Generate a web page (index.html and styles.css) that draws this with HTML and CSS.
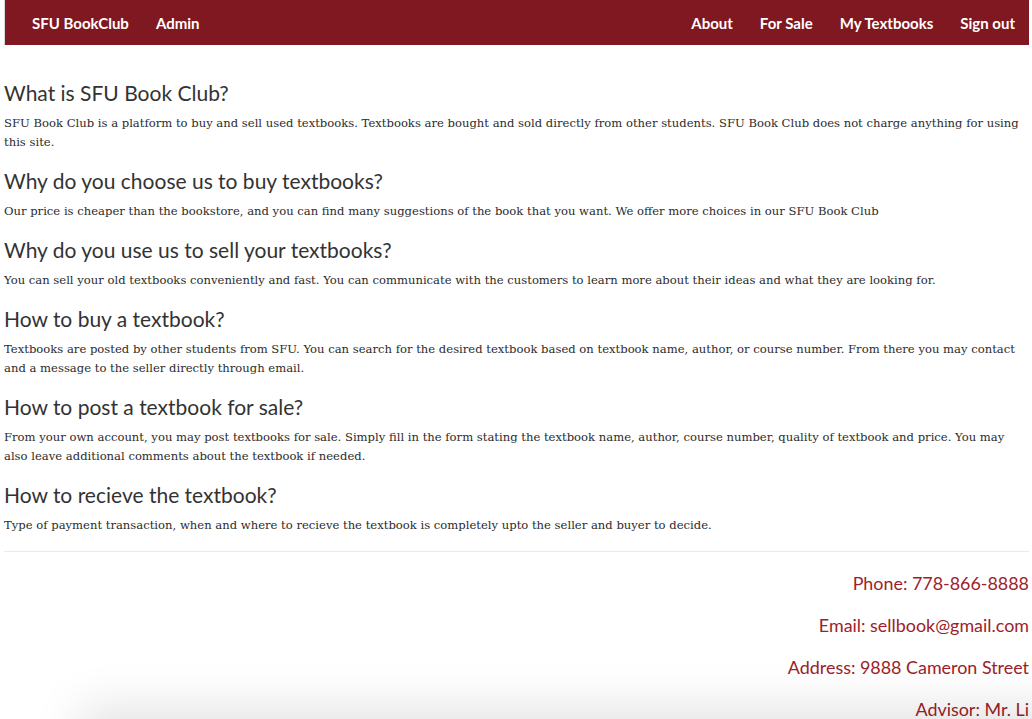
FILE: index.html
```html
<!DOCTYPE html>
<html lang="en">
<head>
<meta charset="utf-8">
<title>SFU BookClub</title>
<link rel="stylesheet" href="styles.css">
</head>
<body>
<nav class="navbar">
  <div class="nav-left">
    <a class="brand" href="#">SFU BookClub</a>
    <a class="nav-link" href="#">Admin</a>
  </div>
  <div class="nav-right">
    <a class="nav-link" href="#">About</a>
    <a class="nav-link" href="#">For Sale</a>
    <a class="nav-link" href="#">My Textbooks</a>
    <a class="nav-link" href="#">Sign out</a>
  </div>
</nav>
<main class="content">
  <section class="faq">
    <h3>What is SFU Book Club?</h3>
    <p>SFU Book Club is a platform to buy and sell used textbooks. Textbooks are bought and sold directly from other students. SFU Book Club does not charge anything for using this site.</p>
  </section>
  <section class="faq">
    <h3>Why do you choose us to buy textbooks?</h3>
    <p>Our price is cheaper than the bookstore, and you can find many suggestions of the book that you want. We offer more choices in our SFU Book Club</p>
  </section>
  <section class="faq">
    <h3>Why do you use us to sell your textbooks?</h3>
    <p>You can sell your old textbooks conveniently and fast. You can communicate with the customers to learn more about their ideas and what they are looking for.</p>
  </section>
  <section class="faq">
    <h3>How to buy a textbook?</h3>
    <p>Textbooks are posted by other students from SFU. You can search for the desired textbook based on textbook name, author, or course number. From there you may contact and a message to the seller directly through email.</p>
  </section>
  <section class="faq">
    <h3>How to post a textbook for sale?</h3>
    <p>From your own account, you may post textbooks for sale. Simply fill in the form stating the textbook name, author, course number, quality of textbook and price. You may also leave additional comments about the textbook if needed.</p>
  </section>
  <section class="faq">
    <h3>How to recieve the textbook?</h3>
    <p>Type of payment transaction, when and where to recieve the textbook is completely upto the seller and buyer to decide.</p>
  </section>
  <hr class="divider">
  <footer class="footer">
    <p>Phone: 778-866-8888</p>
    <p>Email: sellbook@gmail.com</p>
    <p>Address: 9888 Cameron Street</p>
    <p>Advisor: Mr. Li</p>
  </footer>
</main>
<div class="bottom-shadow"></div>
</body>
</html>
```

FILE: styles.css
```css
html, body {
  margin: 0;
  padding: 0;
  background: #fff;
}
body {
  font-family: "DejaVu Serif", Georgia, "Liberation Serif", serif;
  color: #2b2b2b;
  overflow: hidden;
}
.navbar {
  display: flex;
  justify-content: space-between;
  align-items: center;
  height: 45px;
  margin: 0 3px 0 4px;
  border-left: 1px solid #d8d8d8;
  background: #7f1820;
  font-family: Lato, "Open Sans", sans-serif;
  font-weight: 700;
  font-size: 15px;
}
.nav-left, .nav-right {
  display: flex;
  align-items: center;
}
.nav-left {
  padding-left: 13px;
}
.navbar a {
  color: #fff;
  text-decoration: none;
  padding: 1px 13.5px 0;
  line-height: 45px;
}
.brand {
  padding-left: 14px !important;
}
.nav-right .nav-link:last-child {
  padding-right: 14px;
}
.content {
  padding: 35px 3px 0 4px;
}
.faq {
  margin-bottom: 16px;
}
.faq h3 {
  font-family: Lato, "Open Sans", sans-serif;
  font-weight: 400;
  font-size: 21px;
  line-height: 26px;
  margin: 0 0 8px;
  color: #333;
}
.faq p {
  font-size: 11.6px;
  line-height: 19px;
  margin: 0;
}
.divider {
  border: 0;
  border-top: 1px solid #eaeaea;
  margin: 4px 0 0;
}
.footer {
  text-align: right;
  font-family: Lato, "Open Sans", sans-serif;
  font-size: 17.9px;
  color: #9d2228;
  padding-top: 18px;
}
.footer p {
  margin: 0 0 16px;
  line-height: 26px;
}
.bottom-shadow {
  position: fixed;
  left: 90px;
  right: -40px;
  bottom: -60px;
  height: 60px;
  box-shadow: 0 0 50px 10px rgba(0,0,0,0.12);
}
```
